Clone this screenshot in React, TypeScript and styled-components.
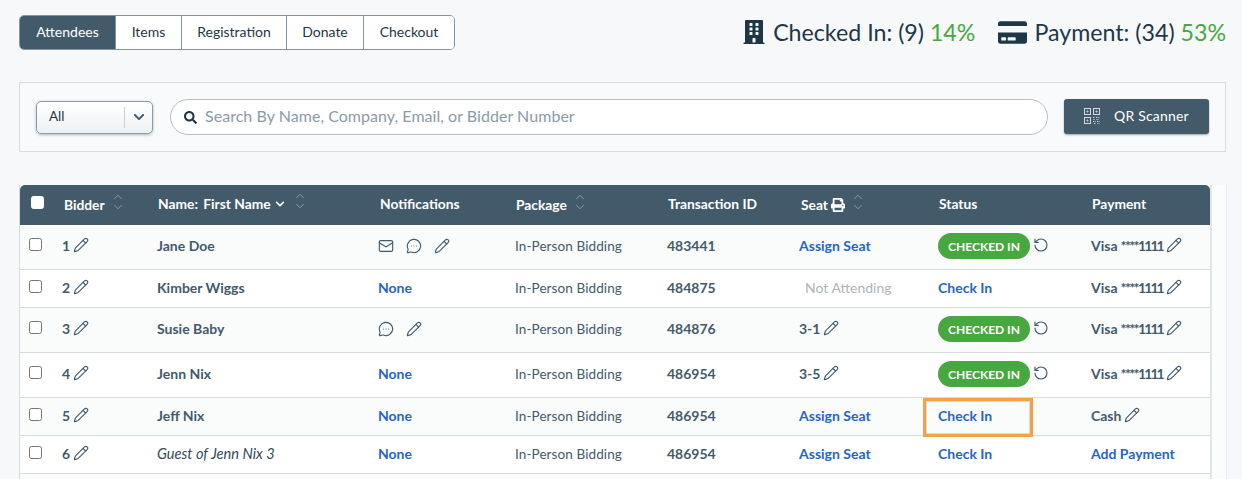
import React, { FC } from 'react';
import styled, { createGlobalStyle } from 'styled-components';
import { FaBuilding, FaCreditCard, FaSearch, FaPrint, FaChevronDown } from 'react-icons/fa';
import { ChevronUp, ChevronDown, Mail, MessageCircleMore, Pencil, RotateCcw } from 'lucide-react';

const FONT = `Lato, "Open Sans", sans-serif`;
const SLATE = '#435a6b';
const INK = '#1f3646';
const BLUE = '#1f66c9';
const GREEN = '#46a83f';
const COLUMNS = '42px 95px 221px 137px 152px 132px 139px 153px 119px';

const GlobalStyle = createGlobalStyle`
  html, body {
    margin: 0;
    background: #f6f8fa;
    overflow: hidden;
  }
  body {
    font-family: ${FONT};
    color: ${SLATE};
  }
`;

const Page = styled.div`
  width: 1242px;
  height: 479px;
  box-sizing: border-box;
  padding: 15px 16px 0 19px;
  overflow: hidden;
`;

const TopBar = styled.div`
  display: flex;
  justify-content: space-between;
  align-items: center;
  height: 35px;
  margin-bottom: 32px;
`;

const Tabs = styled.div`
  display: flex;
  height: 35px;
  box-sizing: border-box;
  border: 1px solid #84959f;
  border-radius: 5px;
  overflow: hidden;
  background: #fff;
`;

const Tab = styled.div<{ $active?: boolean; $width: number }>`
  display: flex;
  align-items: center;
  justify-content: center;
  width: ${(p) => p.$width}px;
  padding-bottom: 2px;
  box-sizing: border-box;
  font-size: 14px;
  color: ${(p) => (p.$active ? '#fff' : INK)};
  background: ${(p) => (p.$active ? SLATE : '#fff')};
  & + & {
    border-left: 1px solid #84959f;
  }
`;

const Stats = styled.div`
  display: flex;
  gap: 23px;
  margin-top: -1px;
`;

const Stat = styled.div`
  display: flex;
  align-items: center;
  gap: 7px;
  font-size: 23.2px;
  font-weight: 400;
  color: ${INK};
  white-space: nowrap;
`;

const Percent = styled.span`
  color: ${GREEN};
`;

const FilterPanel = styled.div`
  display: flex;
  align-items: center;
  height: 70px;
  box-sizing: border-box;
  padding: 0 16px;
  margin-bottom: 33px;
  background: #f9fafb;
  border: 1px solid #d5dde2;
`;

const Select = styled.div`
  display: flex;
  align-items: center;
  width: 117px;
  height: 33px;
  box-sizing: border-box;
  margin-right: 17px;
  border: 1px solid #8a9ba8;
  border-radius: 5px;
  background: linear-gradient(#ffffff, #eef1f3);
  box-shadow: 0 1px 3px rgba(40, 60, 75, 0.35);
  font-size: 13.5px;
  color: ${INK};
`;

const SelectValue = styled.span`
  flex: 1;
  padding: 0 0 2px 12px;
`;

const SelectArrow = styled.span`
  display: flex;
  align-items: center;
  justify-content: center;
  width: 27px;
  height: 21px;
  border-left: 1px solid #c6ced4;
  color: ${SLATE};
  font-size: 12px;
`;

const Search = styled.div`
  display: flex;
  align-items: center;
  gap: 8px;
  flex: 1;
  height: 36px;
  box-sizing: border-box;
  padding: 0 0 3px 13px;
  margin-right: 16px;
  background: #fff;
  border: 1px solid #b4bfc6;
  border-radius: 18px;
  font-size: 16px;
  letter-spacing: 0.04px;
  color: #8c9ba7;
  svg {
    color: ${INK};
    font-size: 13px;
    margin-top: 3px;
  }
`;

const QrButton = styled.div`
  display: flex;
  align-items: center;
  gap: 14px;
  width: 145px;
  height: 35px;
  box-sizing: border-box;
  padding: 0 0 2px 20px;
  margin-top: -1px;
  background: ${SLATE};
  border-radius: 3px;
  box-shadow: 0 1px 2px rgba(30, 50, 65, 0.4);
  color: #fff;
  font-size: 14px;
  letter-spacing: 0.2px;
`;

const TableShell = styled.div`
  width: 1206px;
  margin-left: 1px;
  background: #fbfcfc;
  border-right: 1px solid #e9edf0;
`;

const Table = styled.div`
  width: 1190px;
  border-left: 1px solid #d5dbdf;
  margin-left: -1px;
  box-shadow: 2px 0 0 #e2e6e9;
`;

const HeaderRow = styled.div`
  display: grid;
  grid-template-columns: ${COLUMNS};
  align-items: center;
  height: 40px;
  padding-bottom: 2px;
  box-sizing: border-box;
  background: ${SLATE};
  border-radius: 5px 5px 0 0;
  color: #fff;
  font-size: 13.8px;
  font-weight: 700;
`;

const HeaderCell = styled.div<{ $shift?: number; $sortable?: boolean }>`
  display: flex;
  align-items: center;
  white-space: nowrap;
  padding-left: ${(p) => p.$shift ?? 1}px;
  margin-top: ${(p) => (p.$sortable ? 1 : -1)}px;
`;

const NamePrefix = styled.span`
  margin-right: 2px;
`;

const NameChevron = styled(FaChevronDown).attrs({ size: 10 })`
  margin: 0 2px 0 4px;
`;

const PrintIcon = styled(FaPrint).attrs({ size: 14 })`
  margin-left: 3px;
`;

const SortIcon = styled.span`
  display: inline-flex;
  flex-direction: column;
  margin: -5px 0 0 6px;
  color: #94a3ae;
  svg + svg {
    margin-top: -4px;
  }
`;

const Row = styled.div<{ $tall?: boolean; $shaded?: boolean }>`
  display: grid;
  grid-template-columns: ${COLUMNS};
  align-items: center;
  height: ${(p) => (p.$tall ? 45 : 38)}px;
  box-sizing: border-box;
  padding-bottom: ${(p) => (p.$tall ? 3 : 2)}px;
  background: ${(p) => (p.$shaded ? '#fafbfb' : '#fff')};
  border-bottom: 1px solid #d5dbdf;
  font-size: 14px;
  font-weight: 700;
  white-space: nowrap;
`;

const Check = styled.span<{ $header?: boolean }>`
  display: block;
  width: 13px;
  height: 13px;
  box-sizing: border-box;
  margin: ${(p) => (p.$header ? '-3px 0 0 11px' : '-3px 0 0 9px')};
  background: #fff;
  border: 1px solid ${(p) => (p.$header ? '#fff' : '#767676')};
  border-radius: 2.5px;
`;

const Cell = styled.div`
  display: flex;
  align-items: center;
  position: relative;
`;

const Plain = styled.span`
  font-size: 13.5px;
  font-weight: 400;
  letter-spacing: 0.1px;
`;

const Guest = styled.span`
  font-size: 14.6px;
  font-weight: 400;
  font-style: italic;
  color: #33495a;
`;

const Action = styled.span`
  color: ${BLUE};
`;

const Muted = styled.span`
  padding-left: 6px;
  font-weight: 400;
  color: #aeb4b8;
`;

const Stars = styled.span`
  margin-left: 3px;
  letter-spacing: -1.6px;
`;

const Ones = styled.span`
  letter-spacing: -1.9px;
`;

const EditIcon = styled(Pencil).attrs({ size: 16, strokeWidth: 1.7 })`
  margin-left: 3px;
  margin-top: -2px;
  flex: none;
`;

const IconSlot = styled.span`
  display: flex;
  width: 28px;
`;

const Pill = styled.span`
  display: flex;
  align-items: center;
  justify-content: center;
  width: 92px;
  height: 26px;
  margin-top: 1px;
  border-radius: 13px;
  background: ${GREEN};
  color: #fff;
  font-size: 12px;
  font-weight: 700;
`;

const UndoIcon = styled(RotateCcw).attrs({ size: 16, strokeWidth: 1.7 })`
  margin: -2px 0 0 3px;
  flex: none;
`;

const Highlight = styled.span`
  position: absolute;
  left: -15px;
  top: 50%;
  width: 110px;
  height: 39px;
  margin-top: -18px;
  box-sizing: border-box;
  border: 3px solid #f5a244;
  box-shadow: inset 0 0 0 1px #d5dbdf;
  pointer-events: none;
`;

type RowData = {
  id: number;
  name: string;
  guest?: boolean;
  notes: 'none' | 'all' | 'text';
  txn: string;
  seat: string;
  checkedIn?: boolean;
  highlight?: boolean;
  payment: 'visa' | 'cash' | 'add';
  tall?: boolean;
};

const rows: RowData[] = [
  { id: 1, name: 'Jane Doe', notes: 'all', txn: '483441', seat: 'assign', checkedIn: true, payment: 'visa', tall: true },
  { id: 2, name: 'Kimber Wiggs', notes: 'none', txn: '484875', seat: 'no', payment: 'visa' },
  { id: 3, name: 'Susie Baby', notes: 'text', txn: '484876', seat: '3-1', checkedIn: true, payment: 'visa', tall: true },
  { id: 4, name: 'Jenn Nix', notes: 'none', txn: '486954', seat: '3-5', checkedIn: true, payment: 'visa', tall: true },
  { id: 5, name: 'Jeff Nix', notes: 'none', txn: '486954', seat: 'assign', highlight: true, payment: 'cash' },
  { id: 6, name: 'Guest of Jenn Nix 3', guest: true, notes: 'none', txn: '486954', seat: 'assign', payment: 'add' },
];

const tabs = [
  { label: 'Attendees', width: 95 },
  { label: 'Items', width: 66 },
  { label: 'Registration', width: 105 },
  { label: 'Donate', width: 77 },
  { label: 'Checkout', width: 91 },
];

const QrIcon: FC = () => (
  <svg width="16" height="16" viewBox="0 0 16 16" fill="none" stroke="#d5dbe0" strokeWidth="1">
    <rect x="0.5" y="0.5" width="6" height="6" />
    <rect x="9.5" y="0.5" width="6" height="6" />
    <rect x="0.5" y="9.5" width="6" height="6" />
    <path d="M3 3h1v1H3zM12 3h1v1h-1zM3 12h1v1H3z" />
    <path d="M9 9.5h2M12 9.5h3.5M9.5 11.5h1.5M12.5 11.5h2M9 13.5h3M13 13.5h2.5M10 15.5h2M13.5 15.5h2" strokeDasharray="1 0.6" />
  </svg>
);

const Sort: FC = () => (
  <SortIcon>
    <ChevronUp size={14} strokeWidth={1.5} />
    <ChevronDown size={14} strokeWidth={1.5} />
  </SortIcon>
);

const Notes: FC<{ kind: RowData['notes'] }> = ({ kind }) => {
  if (kind === 'none') return <Action>None</Action>;
  return (
    <>
      {kind === 'all' && (
        <IconSlot>
          <Mail size={16} strokeWidth={1.7} />
        </IconSlot>
      )}
      <IconSlot>
        <MessageCircleMore size={16} strokeWidth={1.7} />
      </IconSlot>
      <IconSlot>
        <Pencil size={16} strokeWidth={1.7} />
      </IconSlot>
    </>
  );
};

const Seat: FC<{ seat: string }> = ({ seat }) => {
  if (seat === 'assign') return <Action>Assign Seat</Action>;
  if (seat === 'no') return <Muted>Not Attending</Muted>;
  return (
    <>
      {seat}
      <EditIcon />
    </>
  );
};

const Payment: FC<{ kind: RowData['payment'] }> = ({ kind }) => {
  if (kind === 'add') return <Action>Add Payment</Action>;
  return (
    <>
      {kind === 'cash' ? (
        'Cash'
      ) : (
        <>
          Visa<Stars>****</Stars>
          <Ones>1111</Ones>
        </>
      )}
      <EditIcon />
    </>
  );
};

const App: FC = () => (
  <Page>
    <GlobalStyle />
    <TopBar>
      <Tabs>
        {tabs.map((t, i) => (
          <Tab key={t.label} $active={i === 0} $width={t.width}>
            {t.label}
          </Tab>
        ))}
      </Tabs>
      <Stats>
        <Stat>
          <FaBuilding size={24} />
          <span>
            Checked In: (9) <Percent>14%</Percent>
          </span>
        </Stat>
        <Stat>
          <FaCreditCard size={29} />
          <span>
            Payment: (34) <Percent>53%</Percent>
          </span>
        </Stat>
      </Stats>
    </TopBar>

    <FilterPanel>
      <Select>
        <SelectValue>All</SelectValue>
        <SelectArrow>
          <FaChevronDown />
        </SelectArrow>
      </Select>
      <Search>
        <FaSearch />
        Search By Name, Company, Email, or Bidder Number
      </Search>
      <QrButton>
        <QrIcon />
        QR Scanner
      </QrButton>
    </FilterPanel>

    <TableShell>
      <Table>
        <HeaderRow>
          <Check $header />
          <HeaderCell $shift={2} $sortable>
            Bidder
            <Sort />
          </HeaderCell>
          <HeaderCell>
            <NamePrefix>Name:&nbsp;</NamePrefix> First Name
            <NameChevron />
            <Sort />
          </HeaderCell>
          <HeaderCell $shift={2}>Notifications</HeaderCell>
          <HeaderCell $sortable>
            Package
            <Sort />
          </HeaderCell>
          <HeaderCell>Transaction ID</HeaderCell>
          <HeaderCell $shift={2} $sortable>
            Seat
            <PrintIcon />
            <Sort />
          </HeaderCell>
          <HeaderCell>Status</HeaderCell>
          <HeaderCell>Payment</HeaderCell>
        </HeaderRow>
        {rows.map((r, i) => (
          <Row key={r.id} $tall={r.tall} $shaded={i % 2 === 0}>
            <Check />
            <Cell>
              {r.id}
              <EditIcon />
            </Cell>
            <Cell>{r.guest ? <Guest>{r.name}</Guest> : r.name}</Cell>
            <Cell>
              <Notes kind={r.notes} />
            </Cell>
            <Cell>
              <Plain>In-Person Bidding</Plain>
            </Cell>
            <Cell>{r.txn}</Cell>
            <Cell>
              <Seat seat={r.seat} />
            </Cell>
            <Cell>
              {r.checkedIn ? (
                <>
                  <Pill>CHECKED IN</Pill>
                  <UndoIcon />
                </>
              ) : (
                <Action>Check In</Action>
              )}
              {r.highlight && <Highlight />}
            </Cell>
            <Cell>
              <Payment kind={r.payment} />
            </Cell>
          </Row>
        ))}
        <Row $shaded />
      </Table>
    </TableShell>
  </Page>
);

export default App;
